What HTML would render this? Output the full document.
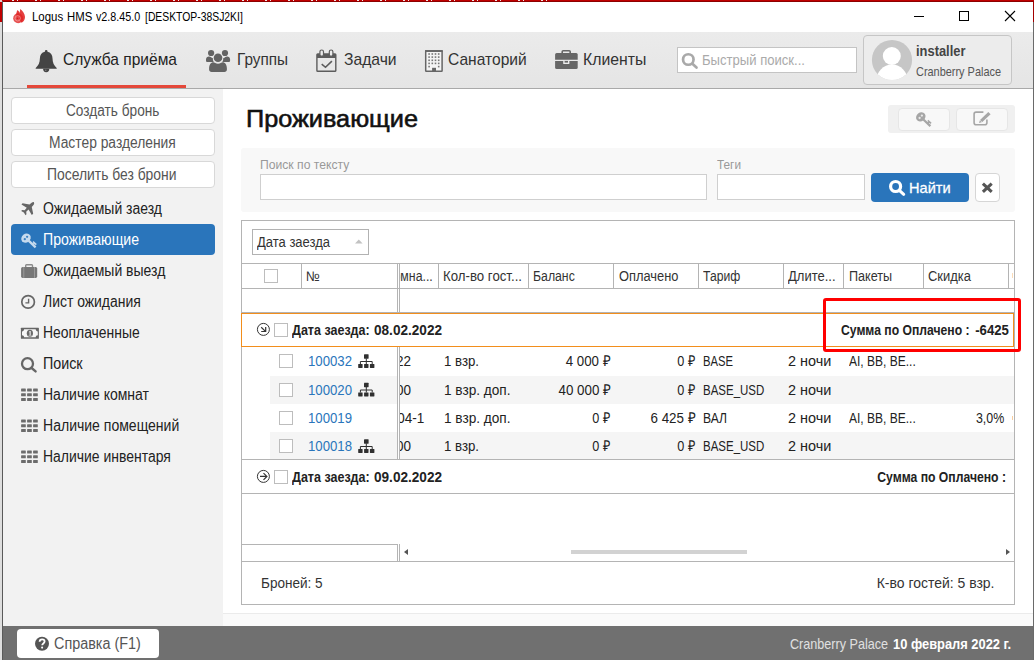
<!DOCTYPE html>
<html><head><meta charset="utf-8"><title>Logus HMS</title>
<style>
html,body{margin:0;padding:0;}
body{width:1034px;height:660px;overflow:hidden;background:#fff;font-family:"Liberation Sans",sans-serif;}
#w{position:relative;width:1034px;height:660px;overflow:hidden;}
#w div,#w span,#w svg{position:absolute;box-sizing:border-box;}
#w span{white-space:nowrap;line-height:1em;transform-origin:0 0;}
#w span.r{transform-origin:100% 0;}
</style></head><body><div id="w">
<div style="left:0px;top:0px;width:1034px;height:1px;background:#c00000;"></div>
<div style="left:3px;top:0px;width:560px;height:1px;background:repeating-linear-gradient(90deg,rgba(255,255,255,0) 0,rgba(255,255,255,0) 9px,#f3e4e4 9px,#f3e4e4 11px,rgba(255,255,255,0) 11px,rgba(255,255,255,0) 14px,#f3e4e4 14px,#f3e4e4 15px,rgba(255,255,255,0) 15px,rgba(255,255,255,0) 23px);"></div>
<div style="left:0px;top:1px;width:1034px;height:1px;background:#8c0000;"></div>
<div style="left:0px;top:0px;width:2px;height:2px;background:#ecc;"></div>
<div style="left:0px;top:2px;width:2px;height:20px;background:#c00000;"></div>
<div style="left:0px;top:22px;width:2px;height:638px;background:#dedede;"></div>
<div style="left:2px;top:1px;width:1px;height:659px;background:#5a5a5a;"></div>
<div style="left:1033px;top:2px;width:1px;height:20px;background:#a30000;"></div>
<div style="left:1033px;top:22px;width:1px;height:638px;background:#6a6a6a;"></div>
<div style="left:3px;top:2px;width:1030px;height:30px;background:#fff;"></div>
<div style="left:914px;top:16px;width:10px;height:1px;background:#000;"></div>
<div style="left:959px;top:11px;width:10px;height:10px;border:1px solid #000;"></div>
<svg style="left:1004px;top:10px" width="12" height="12" viewBox="0 0 12 12"><path d="M1 1L11 11M11 1L1 11" stroke="#000" stroke-width="1.1" fill="none"/></svg>
<div style="left:3px;top:32px;width:1030px;height:56px;background:linear-gradient(#ebebeb,#e5e5e5);"></div>
<div style="left:3px;top:88px;width:1030px;height:1px;background:#a9a9a9;"></div>
<div style="left:27px;top:85px;width:159px;height:3px;background:#e4483a;"></div>
<div style="left:677px;top:47px;width:180px;height:26px;background:#fff;border:1px solid #c4c4c4;"></div>
<div style="left:863px;top:35px;width:149px;height:50px;background:#ececec;border:1px solid #c6c6c6;border-radius:4px;"></div>
<div style="left:3px;top:89px;width:220px;height:537px;background:#f2f2f2;"></div>
<div style="left:11px;top:97px;width:204px;height:27px;background:#fff;border:1px solid #d8d8d8;border-radius:4px;"></div>
<div style="left:11px;top:129px;width:204px;height:27px;background:#fff;border:1px solid #d8d8d8;border-radius:4px;"></div>
<div style="left:11px;top:161px;width:204px;height:27px;background:#fff;border:1px solid #d8d8d8;border-radius:4px;"></div>
<div style="left:11px;top:224px;width:204px;height:31px;background:#2a75bb;border-radius:4px;"></div>
<div style="left:888px;top:105px;width:127px;height:28px;background:#f0f0f0;border-radius:3px;"></div>
<div style="left:898px;top:108px;width:52px;height:23px;background:#f8f8f8;border:1px solid #e6e6e6;border-radius:4px;"></div>
<div style="left:956px;top:108px;width:52px;height:23px;background:#f8f8f8;border:1px solid #e6e6e6;border-radius:4px;"></div>
<div style="left:241px;top:148px;width:774px;height:64px;background:#f8f8f8;border-radius:3px;"></div>
<div style="left:260px;top:174px;width:447px;height:26px;background:#fff;border:1px solid #cfcfcf;"></div>
<div style="left:717px;top:174px;width:148px;height:26px;background:#fff;border:1px solid #cfcfcf;"></div>
<div style="left:871px;top:173px;width:98px;height:29px;background:#2a75bb;border-radius:4px;"></div>
<div style="left:975px;top:173px;width:25px;height:29px;background:#fff;border:1px solid #d6d6d6;border-radius:4px;"></div>
<div style="left:241px;top:220px;width:774px;height:385px;border:1px solid #b4b4b4;background:#fff;"></div>
<div style="left:252px;top:229px;width:117px;height:26px;background:#fff;border:1px solid #b2b2b2;"></div>
<svg style="left:355px;top:239px" width="8" height="5" viewBox="0 0 8 5"><path d="M0 4.6L3.8 0.4L7.600 4.6Z" fill="#c2c2c2"/></svg>
<div style="left:242px;top:263px;width:772px;height:1px;background:#b4b4b4;"></div>
<div style="left:242px;top:288px;width:772px;height:1px;background:#b4b4b4;"></div>
<div style="left:242px;top:312px;width:772px;height:1px;background:#b4b4b4;"></div>
<div style="left:301px;top:264px;width:1px;height:24px;background:#b4b4b4;"></div>
<div style="left:438px;top:264px;width:1px;height:24px;background:#b4b4b4;"></div>
<div style="left:528px;top:264px;width:1px;height:24px;background:#b4b4b4;"></div>
<div style="left:613px;top:264px;width:1px;height:24px;background:#b4b4b4;"></div>
<div style="left:698px;top:264px;width:1px;height:24px;background:#b4b4b4;"></div>
<div style="left:783px;top:264px;width:1px;height:24px;background:#b4b4b4;"></div>
<div style="left:843px;top:264px;width:1px;height:24px;background:#b4b4b4;"></div>
<div style="left:923px;top:264px;width:1px;height:24px;background:#b4b4b4;"></div>
<div style="left:1008px;top:264px;width:1px;height:24px;background:#b4b4b4;"></div>
<div style="left:397px;top:264px;width:1px;height:195px;background:#b4b4b4;"></div>
<div style="left:399px;top:264px;width:1px;height:195px;background:#b4b4b4;"></div>
<div style="left:264px;top:269px;width:14px;height:14px;background:#fff;border:1px solid #bdbdbd;"></div>
<div style="left:400px;top:264px;width:38px;height:24px;overflow:hidden;"><span style="right:5px;top:5px;font-size:14px;color:#333;transform:scaleX(0.88);transform-origin:100% 0;">Комна...</span></div>
<div style="left:270px;top:376px;width:744px;height:28px;background:#f5f5f5;"></div>
<div style="left:270px;top:432px;width:744px;height:27px;background:#f5f5f5;"></div>
<div style="left:397px;top:347px;width:1px;height:112px;background:#b4b4b4;"></div>
<div style="left:398px;top:347px;width:1px;height:112px;background:#fff;"></div>
<div style="left:399px;top:347px;width:1px;height:112px;background:#b4b4b4;"></div>
<div style="left:279px;top:354px;width:14px;height:14px;background:#fff;border:1px solid #bdbdbd;"></div>
<div style="left:400px;top:347px;width:38px;height:29px;overflow:hidden;"><span class="r" style="right:26.5px;top:6px;font-size:15px;color:#222;transform:scaleX(0.9);">222</span></div>
<div style="left:279px;top:383px;width:14px;height:14px;background:#fff;border:1px solid #bdbdbd;"></div>
<div style="left:400px;top:376px;width:38px;height:28px;overflow:hidden;"><span class="r" style="right:26.5px;top:6px;font-size:15px;color:#222;transform:scaleX(0.9);">300</span></div>
<div style="left:279px;top:411px;width:14px;height:14px;background:#fff;border:1px solid #bdbdbd;"></div>
<div style="left:400px;top:404px;width:38px;height:28px;overflow:hidden;"><span class="r" style="right:13.600000000000001px;top:6px;font-size:15px;color:#222;transform:scaleX(0.9);">404-1</span></div>
<div style="left:279px;top:439px;width:14px;height:14px;background:#fff;border:1px solid #bdbdbd;"></div>
<div style="left:400px;top:432px;width:38px;height:27px;overflow:hidden;"><span class="r" style="right:26.5px;top:6px;font-size:15px;color:#222;transform:scaleX(0.9);">300</span></div>
<div style="left:1012px;top:416px;width:1px;height:4px;background:#f9cfa0;"></div>
<div style="left:1012px;top:273px;width:1px;height:5px;background:#fbdcb8;"></div>
<div style="left:241px;top:313px;width:773px;height:34px;border:1px solid #f28e1c;background:#fff;"></div>
<div style="left:274px;top:323px;width:14px;height:14px;background:#fff;border:1px solid #bdbdbd;"></div>
<div style="left:242px;top:459px;width:772px;height:1px;background:#b4b4b4;"></div>
<div style="left:242px;top:493px;width:772px;height:1px;background:#b4b4b4;"></div>
<div style="left:274px;top:470px;width:14px;height:14px;background:#fff;border:1px solid #bdbdbd;"></div>
<div style="left:242px;top:544px;width:156px;height:1px;background:#b4b4b4;"></div>
<div style="left:242px;top:561px;width:772px;height:1px;background:#b4b4b4;"></div>
<div style="left:397px;top:544px;width:1px;height:17px;background:#b4b4b4;"></div>
<div style="left:399px;top:544px;width:1px;height:17px;background:#b4b4b4;"></div>
<svg style="left:404px;top:549px" width="4" height="6" viewBox="0 0 4 6"><path d="M4 0L0 3L4 6Z" fill="#555"/></svg>
<svg style="left:1006px;top:549px" width="4" height="6" viewBox="0 0 4 6"><path d="M0 0L4 3L0 6Z" fill="#555"/></svg>
<div style="left:571px;top:550px;width:176px;height:4px;background:#d2d2d2;"></div>
<div style="left:223px;top:613px;width:810px;height:13px;background:#fafafa;border-top:1px solid #ebebeb;"></div>
<div style="left:3px;top:626px;width:1030px;height:34px;background:#707070;"></div>
<div style="left:17px;top:629px;width:142px;height:29px;background:#fff;border-radius:4px;"></div>
<svg style="left:0;top:0" width="1034" height="660" viewBox="0 0 1034 660"><g fill="#e02424"><circle cx="18.200" cy="18.200" r="5.000" opacity="0.800"/><path d="M16.100 16.500C16.000 13.800 16.700 11.600 17.400 9.900C18.400 10.800 19.300 11.700 19.700 12.600L19.500 16.500Z" opacity="0.900"/><path d="M19.200 15.500C19.800 12.800 20.000 10.800 20.200 9.000C22.600 10.800 25.000 13.800 25.000 17.000C25.000 19.900 23.400 21.900 21.400 22.700L19.200 18.500Z" opacity="0.880"/></g><circle cx="17.700" cy="18.300" r="2.700" fill="none" stroke="#f7b0b0" stroke-width="0.800" opacity="0.750"/><circle cx="17.500" cy="18.300" r="0.900" fill="#d81e1e"/><path d="M46.2 49.9a1.3 1.3 0 0 1 1.3 1.3v0.5c3.2 0.7 5 3.3 5 6.6c0 4.6 1.6 7.3 4.2 9.6c0.3 0.4 0 0.9 -0.5 0.9H36.2c-0.5 0 -0.8 -0.5 -0.5 -0.9c2.600 -2.3 4.2 -5 4.2 -9.6c0 -3.3 1.8 -5.900 5 -6.6v-0.5a1.3 1.3 0 0 1 1.300 -1.300z" fill="#444" /><path d="M43.1 68.800h6.200a3.100 3.400 0 0 1 -6.200 0z" fill="#444" /><circle cx="45.8" cy="70.2" r="0.7" fill="#8a8a8a"/><circle cx="211.1" cy="53.0" r="3.1" fill="#636363"/><circle cx="225.0" cy="53.0" r="3.1" fill="#636363"/><path d="M206 59.5c0 -2 1.3 -3.100 3.000 -3.100c0.800 0 1.500 0.300 2.100 0.800c0.600 0.500 1.300 0.900 1.900 1.000c-0.300 1.300 0.100 2.800 0.900 3.900H207.600c-1 0 -1.600 -0.700 -1.600 -1.600z" fill="#636363" /><path d="M230.100 59.5c0 -2 -1.300 -3.100 -3.000 -3.100c-0.800 0 -1.500 0.300 -2.100 0.800c-0.600 0.500 -1.300 0.900 -1.900 1.000c0.300 1.300 -0.100 2.800 -0.900 3.900H228.500c1 0 1.600 -0.700 1.600 -1.600z" fill="#636363" /><circle cx="218.0" cy="57.7" r="4.3" fill="#636363"/><path d="M209.1 68.5c0 -3.8 1.700 -6.300 4.300 -6.300c1.100 0 2.400 1.500 4.600 1.500s3.500 -1.500 4.600 -1.500c2.600 0 4.300 2.500 4.300 6.300v1c0 1.500 -1 2.400 -2.500 2.400H211.600c-1.500 0 -2.500 -0.900 -2.500 -2.400z" fill="#636363" /><path d="M317.700 53.2h17.300a1.500 1.500 0 0 1 1.500 1.500v15.700a1.500 1.500 0 0 1 -1.500 1.500h-17.300a1.500 1.500 0 0 1 -1.500 -1.500v-15.700a1.500 1.500 0 0 1 1.500 -1.500zM317.600 58v12.500h17.500V58z" fill="#5c5c5c" fill-rule="evenodd"/><rect x="319.9" y="50" width="3.6" height="6.2" rx="1.8" fill="#ebebeb" stroke="#5c5c5c" stroke-width="1.2"/><rect x="329.3" y="50" width="3.6" height="6.2" rx="1.8" fill="#ebebeb" stroke="#5c5c5c" stroke-width="1.2"/><path d="M321.700 64.2L325.500 67.300L331.900 61.2" fill="none" stroke="#5c5c5c" stroke-width="1.6" /><rect x="425.7" y="50.9" width="16.4" height="20.3" rx="0.5" fill="#f4f4f4" stroke="#666" stroke-width="1.5"/><rect x="425" y="50.1" width="17.8" height="1.8" rx="0" fill="#666" /><rect x="428.3" y="53.2" width="1.6" height="1.6" rx="0" fill="#777" /><rect x="431.5" y="53.2" width="1.6" height="1.6" rx="0" fill="#777" /><rect x="434.7" y="53.2" width="1.6" height="1.6" rx="0" fill="#777" /><rect x="437.9" y="53.2" width="1.6" height="1.6" rx="0" fill="#777" /><rect x="428.3" y="56.300000000000004" width="1.6" height="1.6" rx="0" fill="#777" /><rect x="431.5" y="56.300000000000004" width="1.6" height="1.6" rx="0" fill="#777" /><rect x="434.7" y="56.300000000000004" width="1.6" height="1.6" rx="0" fill="#777" /><rect x="437.9" y="56.300000000000004" width="1.6" height="1.6" rx="0" fill="#777" /><rect x="428.3" y="59.5" width="1.6" height="1.6" rx="0" fill="#777" /><rect x="431.5" y="59.5" width="1.6" height="1.6" rx="0" fill="#777" /><rect x="434.7" y="59.5" width="1.6" height="1.6" rx="0" fill="#777" /><rect x="437.9" y="59.5" width="1.6" height="1.6" rx="0" fill="#777" /><rect x="428.3" y="62.6" width="1.6" height="1.6" rx="0" fill="#777" /><rect x="431.5" y="62.6" width="1.6" height="1.6" rx="0" fill="#777" /><rect x="434.7" y="62.6" width="1.6" height="1.6" rx="0" fill="#777" /><rect x="437.9" y="62.6" width="1.6" height="1.6" rx="0" fill="#777" /><rect x="428.3" y="65.8" width="1.6" height="1.6" rx="0" fill="#777" /><rect x="437.9" y="65.8" width="1.6" height="1.6" rx="0" fill="#777" /><rect x="432.1" y="67.8" width="3.9" height="3.6" rx="0" fill="#666" /><path d="M562.2 53.5v-1.700a1 1 0 0 1 1 -1h6a1 1 0 0 1 1 1v1.700" fill="none" stroke="#666" stroke-width="1.6" /><path d="M556.600 53h19.600a1.500 1.500 0 0 1 1.500 1.500v5.300H555.100v-5.300a1.500 1.500 0 0 1 1.500 -1.500z" fill="#666" /><path d="M555.100 61h22.600v6.500a1.500 1.500 0 0 1 -1.500 1.500h-19.600a1.500 1.500 0 0 1 -1.500 -1.500z" fill="#666" /><rect x="563.2" y="60.9" width="6.2" height="3" rx="0.3" fill="#ececec" /><rect x="564.6" y="60.9" width="3.4" height="1.7" rx="0" fill="#666" /><circle cx="688.3" cy="59.5" r="5.25" fill="none" stroke="#a9a9a9" stroke-width="2.7"/><path d="M692.400 63.800L696.500 67.600" fill="none" stroke="#a9a9a9" stroke-width="2.7" stroke-linecap="round"/><clipPath id="av"><circle cx="892" cy="60" r="20.100"/></clipPath><circle cx="892" cy="60" r="20.1" fill="#c6c6c6"/><g clip-path="url(#av)" fill="#fff"><circle cx="891.800" cy="56.000" r="9.000"/><ellipse cx="892" cy="81.500" rx="15.800" ry="17.000"/></g><path d="M33.900 202.1c0.500 0.300 0.300 1.100 -0.300 1.900l-2.000 2.300l1.500 7.400l-1.500 1.200l-3.500 -5.700l-2.500 2.300l0.300 2.700l-1.100 1.000l-1.700 -2.900l-2.900 -1.700l1.000 -1.100l2.700 0.300l2.300 -2.500l-5.700 -3.500l1.200 -1.500l7.400 1.500l2.300 -2.000c0.800 -0.600 1.600 -0.800 2.500 -0.700z" fill="#666" transform="translate(34.3 214.9) scale(0.93) translate(-34.3 -214.9)"/><g transform="translate(26.0,238.1)"><ellipse cx="0" cy="0" rx="5.000" ry="4.300" transform="rotate(-38)" fill="#c6daee"/><circle cx="1.100" cy="-1.300" r="1.150" fill="#3d82c2"/><circle cx="-1.200" cy="1.100" r="1.150" fill="#3d82c2"/><path d="M2.600 2.600L9.600 9.300" stroke="#c6daee" stroke-width="2.300" fill="none"/><path d="M6.900 6.600L8.500 4.900M7.000 3.500L10.300 6.500" stroke="#c6daee" stroke-width="1.500" fill="none"/></g><path d="M25.700 267v-1.500a0.800 0.800 0 0 1 0.800 -0.800h5.200a0.800 0.800 0 0 1 0.800 0.800V267" fill="none" stroke="#8a8a8a" stroke-width="1.4" /><rect x="21.1" y="266.9" width="16.1" height="11" rx="1.6" fill="#777" /><rect x="23.5" y="266.9" width="0.7" height="11" rx="0" fill="#a9a9a9" /><rect x="34.1" y="266.9" width="0.7" height="11" rx="0" fill="#a9a9a9" /><circle cx="28.1" cy="301.9" r="6.3" fill="none" stroke="#666" stroke-width="1.7"/><path d="M28.600 298.700V302.900H25.400" fill="none" stroke="#666" stroke-width="1.4" /><rect x="20.9" y="327.8" width="18" height="10.9" rx="0.5" fill="#666" /><path d="M24.100 329.300h11.600c0 1.200 0.900 2.100 2.100 2.100v3.800c-1.200 0 -2.100 0.900 -2.100 2.100h-11.600c0 -1.200 -0.900 -2.100 -2.100 -2.100v-3.800c1.200 0 2.100 -0.900 2.100 -2.100z" fill="#f6f6f6" /><ellipse cx="29.900" cy="333.250" rx="3.100" ry="3.500" fill="#6a6a6a"/><path d="M29.100 331.600l1.100 -0.500h0.500v3.800h0.800v0.700h-2.800v-0.700h0.900v-2.800l-0.700 0.300z" fill="#f0f0f0" /><circle cx="27.5" cy="363.7" r="5.5" fill="none" stroke="#666" stroke-width="2.3"/><path d="M31.600 368.000L35.600 371.400" fill="none" stroke="#666" stroke-width="2.4" stroke-linecap="round"/><rect x="21.1" y="388.4" width="4.7" height="3.1" rx="0.5" fill="#6c6c6c" /><rect x="27.1" y="388.4" width="4.7" height="3.1" rx="0.5" fill="#6c6c6c" /><rect x="33.1" y="388.4" width="4.7" height="3.1" rx="0.5" fill="#6c6c6c" /><rect x="21.1" y="393.15" width="4.7" height="3.1" rx="0.5" fill="#6c6c6c" /><rect x="27.1" y="393.15" width="4.7" height="3.1" rx="0.5" fill="#6c6c6c" /><rect x="33.1" y="393.15" width="4.7" height="3.1" rx="0.5" fill="#6c6c6c" /><rect x="21.1" y="397.9" width="4.7" height="3.1" rx="0.5" fill="#6c6c6c" /><rect x="27.1" y="397.9" width="4.7" height="3.1" rx="0.5" fill="#6c6c6c" /><rect x="33.1" y="397.9" width="4.7" height="3.1" rx="0.5" fill="#6c6c6c" /><rect x="21.1" y="419.4" width="4.7" height="3.1" rx="0.5" fill="#6c6c6c" /><rect x="27.1" y="419.4" width="4.7" height="3.1" rx="0.5" fill="#6c6c6c" /><rect x="33.1" y="419.4" width="4.7" height="3.1" rx="0.5" fill="#6c6c6c" /><rect x="21.1" y="424.15" width="4.7" height="3.1" rx="0.5" fill="#6c6c6c" /><rect x="27.1" y="424.15" width="4.7" height="3.1" rx="0.5" fill="#6c6c6c" /><rect x="33.1" y="424.15" width="4.7" height="3.1" rx="0.5" fill="#6c6c6c" /><rect x="21.1" y="428.9" width="4.7" height="3.1" rx="0.5" fill="#6c6c6c" /><rect x="27.1" y="428.9" width="4.7" height="3.1" rx="0.5" fill="#6c6c6c" /><rect x="33.1" y="428.9" width="4.7" height="3.1" rx="0.5" fill="#6c6c6c" /><rect x="21.1" y="450.4" width="4.7" height="3.1" rx="0.5" fill="#6c6c6c" /><rect x="27.1" y="450.4" width="4.7" height="3.1" rx="0.5" fill="#6c6c6c" /><rect x="33.1" y="450.4" width="4.7" height="3.1" rx="0.5" fill="#6c6c6c" /><rect x="21.1" y="455.15" width="4.7" height="3.1" rx="0.5" fill="#6c6c6c" /><rect x="27.1" y="455.15" width="4.7" height="3.1" rx="0.5" fill="#6c6c6c" /><rect x="33.1" y="455.15" width="4.7" height="3.1" rx="0.5" fill="#6c6c6c" /><rect x="21.1" y="459.9" width="4.7" height="3.1" rx="0.5" fill="#6c6c6c" /><rect x="27.1" y="459.9" width="4.7" height="3.1" rx="0.5" fill="#6c6c6c" /><rect x="33.1" y="459.9" width="4.7" height="3.1" rx="0.5" fill="#6c6c6c" /><g transform="translate(920.8,116.9)"><ellipse cx="0" cy="0" rx="5.000" ry="4.300" transform="rotate(-38)" fill="#a6a6a6"/><circle cx="1.100" cy="-1.300" r="1.150" fill="#e9e9e9"/><circle cx="-1.200" cy="1.100" r="1.150" fill="#e9e9e9"/><path d="M2.600 2.600L9.600 9.300" stroke="#a6a6a6" stroke-width="2.300" fill="none"/><path d="M6.900 6.600L8.500 4.900M7.000 3.500L10.300 6.500" stroke="#a6a6a6" stroke-width="1.500" fill="none"/></g><path d="M986.900 119.500v3.200a2 2 0 0 1 -2 2h-8.800a2 2 0 0 1 -2 -2v-8.600a2 2 0 0 1 2 -2h7.300" fill="none" stroke="#a6a6a6" stroke-width="1.6" /><path d="M988.300 112.000l2.300 2.200l-8.300 7.900l-3.300 1.000l1.000 -3.200z" fill="#a6a6a6" /><path d="M980.100 120.300l1.800 1.700" fill="none" stroke="#f7f7f7" stroke-width="0.7" /><circle cx="895.6" cy="186.5" r="5.0" fill="none" stroke="#fff" stroke-width="3.2"/><path d="M899.600 190.600L903.700 194.300" fill="none" stroke="#fff" stroke-width="3.1" stroke-linecap="round"/><path d="M982.900 183.700L991.700 191.900M991.700 183.700L982.900 191.900" fill="none" stroke="#555" stroke-width="3.1" /><rect x="364.0" y="354.29999999999995" width="4.6" height="4.4" rx="0.4" fill="#303030" /><rect x="358.2" y="363.9" width="4.4" height="4.1" rx="0.4" fill="#303030" /><rect x="364.09999999999997" y="363.9" width="4.4" height="4.1" rx="0.4" fill="#303030" /><rect x="369.9" y="363.9" width="4.5" height="4.1" rx="0.4" fill="#303030" /><path d="M366.3 358.4V364.0M360.4 364.0V361.5H372.2V364.0" fill="none" stroke="#303030" stroke-width="1.0" /><rect x="364.0" y="382.79999999999995" width="4.6" height="4.4" rx="0.4" fill="#303030" /><rect x="358.2" y="392.4" width="4.4" height="4.1" rx="0.4" fill="#303030" /><rect x="364.09999999999997" y="392.4" width="4.4" height="4.1" rx="0.4" fill="#303030" /><rect x="369.9" y="392.4" width="4.5" height="4.1" rx="0.4" fill="#303030" /><path d="M366.3 386.9V392.5M360.4 392.5V390.0H372.2V392.5" fill="none" stroke="#303030" stroke-width="1.0" /><rect x="364.0" y="439.29999999999995" width="4.6" height="4.4" rx="0.4" fill="#303030" /><rect x="358.2" y="448.9" width="4.4" height="4.1" rx="0.4" fill="#303030" /><rect x="364.09999999999997" y="448.9" width="4.4" height="4.1" rx="0.4" fill="#303030" /><rect x="369.9" y="448.9" width="4.5" height="4.1" rx="0.4" fill="#303030" /><path d="M366.3 443.4V449.0M360.4 449.0V446.5H372.2V449.0" fill="none" stroke="#303030" stroke-width="1.0" /><circle cx="263.4" cy="329.4" r="6.0" fill="none" stroke="#333" stroke-width="1.0"/><path d="M261.200 327.200L265.500 331.400M265.700 327.100V331.500H261.200" fill="none" stroke="#333" stroke-width="1.2" /><circle cx="263.4" cy="476.4" r="6.0" fill="none" stroke="#333" stroke-width="1.0"/><path d="M260.000 476.400H266.800M263.500 473.100L266.900 476.400L263.500 479.800" fill="none" stroke="#333" stroke-width="1.2" /><circle cx="42.0" cy="643.7" r="7.0" fill="#555"/><path d="M39.600 641.800c0 -1.600 1.100 -2.500 2.500 -2.500s2.500 0.900 2.500 2.200c0 1.900 -2.400 2.000 -2.400 3.700" fill="none" stroke="#fff" stroke-width="1.8" /><circle cx="42.1" cy="647.6" r="1.05" fill="#fff"/></svg>
<div style="left:823px;top:298px;width:198px;height:54px;border:3px solid #f00;border-radius:3px;"></div>
<span id="t0" style="top:11px;font-size:12px;color:#000;left:32.2px;transform:scaleX(0.9540);">Logus</span>
<span id="t1" style="top:11px;font-size:12px;color:#000;left:67.2px;transform:scaleX(0.9448);">HMS</span>
<span id="t2" style="top:11px;font-size:12px;color:#000;left:96.2px;transform:scaleX(0.8952);">v2.8.45.0</span>
<span id="t3" style="top:11px;font-size:12px;color:#000;left:144.8px;transform:scaleX(0.8643);">[DESKTOP-38SJ2KI]</span>
<span id="t4" style="top:51px;font-size:17px;color:#222;left:63px;transform:scaleX(0.9139);">Служба приёма</span>
<span id="t5" style="top:51px;font-size:17px;color:#333;left:236.5px;transform:scaleX(0.9002);">Группы</span>
<span id="t6" style="top:51px;font-size:17px;color:#333;left:344px;transform:scaleX(0.9215);">Задачи</span>
<span id="t7" style="top:51px;font-size:17px;color:#333;left:448px;transform:scaleX(0.9163);">Санаторий</span>
<span id="t8" style="top:51px;font-size:17px;color:#333;left:583px;transform:scaleX(0.9300);">Клиенты</span>
<span id="t9" style="top:52px;font-size:15px;color:#aaa;left:701.5px;transform:scaleX(0.8723);">Быстрый поиск...</span>
<span id="t10" style="top:43px;font-size:15px;color:#444;font-weight:700;left:916px;transform:scaleX(0.8604);">installer</span>
<span id="t11" style="top:65px;font-size:13px;color:#555;left:916px;transform:scaleX(0.8403);">Cranberry Palace</span>
<span id="t12" style="top:103px;font-size:16px;color:#555;left:65.9px;transform:scaleX(0.8538);">Создать бронь</span>
<span id="t13" style="top:135px;font-size:16px;color:#555;left:48.7px;transform:scaleX(0.8639);">Мастер разделения</span>
<span id="t14" style="top:167px;font-size:16px;color:#555;left:47.2px;transform:scaleX(0.8679);">Поселить без брони</span>
<span id="t15" style="top:201px;font-size:16px;color:#222;left:43.4px;transform:scaleX(0.8737);">Ожидаемый заезд</span>
<span id="t16" style="top:232px;font-size:16px;color:#fff;left:43.4px;transform:scaleX(0.8809);">Проживающие</span>
<span id="t17" style="top:263px;font-size:16px;color:#222;left:43.4px;transform:scaleX(0.8738);">Ожидаемый выезд</span>
<span id="t18" style="top:294px;font-size:16px;color:#222;left:43.4px;transform:scaleX(0.8713);">Лист ожидания</span>
<span id="t19" style="top:325px;font-size:16px;color:#222;left:43.4px;transform:scaleX(0.8696);">Неоплаченные</span>
<span id="t20" style="top:356px;font-size:16px;color:#222;left:43.4px;transform:scaleX(0.8930);">Поиск</span>
<span id="t21" style="top:387px;font-size:16px;color:#222;left:43.4px;transform:scaleX(0.8750);">Наличие комнат</span>
<span id="t22" style="top:418px;font-size:16px;color:#222;left:43.4px;transform:scaleX(0.8771);">Наличие помещений</span>
<span id="t23" style="top:449px;font-size:16px;color:#222;left:43.4px;transform:scaleX(0.8724);">Наличие инвентаря</span>
<span id="t24" style="top:108px;font-size:23px;color:#111;left:246px;transform:scaleX(1.0979);-webkit-text-stroke:0.55px #111;">Проживающие</span>
<span id="t25" style="top:158px;font-size:13px;color:#999;left:260px;transform:scaleX(0.9351);">Поиск по тексту</span>
<span id="t26" style="top:158px;font-size:13px;color:#999;left:717px;transform:scaleX(0.9073);">Теги</span>
<span id="t27" style="top:180px;font-size:15px;color:#fff;left:908.6px;transform:scaleX(0.9717);-webkit-text-stroke:0.3px #fff;">Найти</span>
<span id="t28" style="top:235px;font-size:14px;color:#333;left:257px;transform:scaleX(0.9283);">Дата заезда</span>
<span id="t29" style="top:269px;font-size:14px;color:#333;left:305.8px;transform:scaleX(0.9314);">№</span>
<span id="t30" style="top:269px;font-size:14px;color:#333;left:442.8px;transform:scaleX(0.9456);">Кол-во гост...</span>
<span id="t31" style="top:269px;font-size:14px;color:#333;left:533.3px;transform:scaleX(0.8768);">Баланс</span>
<span id="t32" style="top:269px;font-size:14px;color:#333;left:618.5px;transform:scaleX(0.9178);">Оплачено</span>
<span id="t33" style="top:269px;font-size:14px;color:#333;left:703.3px;transform:scaleX(0.8706);">Тариф</span>
<span id="t34" style="top:269px;font-size:14px;color:#333;left:787.8px;transform:scaleX(0.9299);">Длите...</span>
<span id="t35" style="top:269px;font-size:14px;color:#333;left:848.7px;transform:scaleX(0.9012);">Пакеты</span>
<span id="t36" style="top:269px;font-size:14px;color:#333;left:928.2px;transform:scaleX(0.9235);">Скидка</span>
<span id="t37" style="top:353px;font-size:15px;color:#2a75bb;left:307.6px;transform:scaleX(0.8789);">100032</span>
<span id="t38" style="top:353px;font-size:15px;color:#222;left:443.6px;transform:scaleX(0.8815);">1 взр.</span>
<span id="t39" class="r" style="top:353px;font-size:15px;color:#222;right:423.29999999999995px;transform:scaleX(0.8872);">4 000 ₽</span>
<span id="t40" class="r" style="top:353px;font-size:15px;color:#222;right:338.20000000000005px;transform:scaleX(0.8459);">0 ₽</span>
<span id="t41" style="top:353px;font-size:15px;color:#222;left:702.6px;transform:scaleX(0.7494);">BASE</span>
<span id="t42" style="top:353px;font-size:15px;color:#222;left:788px;transform:scaleX(0.9622);">2 ночи</span>
<span id="t43" style="top:353px;font-size:15px;color:#222;left:848.7px;transform:scaleX(0.8012);">AI, BB, BE...</span>
<span id="t44" style="top:382px;font-size:15px;color:#2a75bb;left:307.6px;transform:scaleX(0.8789);">100020</span>
<span id="t45" style="top:382px;font-size:15px;color:#222;left:443.6px;transform:scaleX(0.9078);">1 взр. доп.</span>
<span id="t46" class="r" style="top:382px;font-size:15px;color:#222;right:423.29999999999995px;transform:scaleX(0.8908);">40 000 ₽</span>
<span id="t47" class="r" style="top:382px;font-size:15px;color:#222;right:338.20000000000005px;transform:scaleX(0.8459);">0 ₽</span>
<span id="t48" style="top:382px;font-size:15px;color:#222;left:702.6px;transform:scaleX(0.7658);">BASE_USD</span>
<span id="t49" style="top:382px;font-size:15px;color:#222;left:788px;transform:scaleX(0.9622);">2 ночи</span>
<span id="t50" style="top:410px;font-size:15px;color:#2a75bb;left:307.6px;transform:scaleX(0.8789);">100019</span>
<span id="t51" style="top:410px;font-size:15px;color:#222;left:443.6px;transform:scaleX(0.9078);">1 взр. доп.</span>
<span id="t52" class="r" style="top:410px;font-size:15px;color:#222;right:423.29999999999995px;transform:scaleX(0.8459);">0 ₽</span>
<span id="t53" class="r" style="top:410px;font-size:15px;color:#222;right:338.20000000000005px;transform:scaleX(0.8912);">6 425 ₽</span>
<span id="t54" style="top:410px;font-size:15px;color:#222;left:702.6px;transform:scaleX(0.8084);">ВАЛ</span>
<span id="t55" style="top:410px;font-size:15px;color:#222;left:788px;transform:scaleX(0.9622);">2 ночи</span>
<span id="t56" style="top:410px;font-size:15px;color:#222;left:848.7px;transform:scaleX(0.8012);">AI, BB, BE...</span>
<span id="t57" class="r" style="top:410px;font-size:15px;color:#222;right:29.600000000000023px;transform:scaleX(0.8274);">3,0%</span>
<span id="t58" style="top:438px;font-size:15px;color:#2a75bb;left:307.6px;transform:scaleX(0.8789);">100018</span>
<span id="t59" style="top:438px;font-size:15px;color:#222;left:443.6px;transform:scaleX(0.8815);">1 взр.</span>
<span id="t60" class="r" style="top:438px;font-size:15px;color:#222;right:423.29999999999995px;transform:scaleX(0.8459);">0 ₽</span>
<span id="t61" class="r" style="top:438px;font-size:15px;color:#222;right:338.20000000000005px;transform:scaleX(0.8459);">0 ₽</span>
<span id="t62" style="top:438px;font-size:15px;color:#222;left:702.6px;transform:scaleX(0.7658);">BASE_USD</span>
<span id="t63" style="top:438px;font-size:15px;color:#222;left:788px;transform:scaleX(0.9622);">2 ночи</span>
<span id="t64" style="top:323px;font-size:14px;color:#222;font-weight:700;left:292.2px;transform:scaleX(0.8937);">Дата заезда:</span>
<span id="t65" style="top:323px;font-size:14px;color:#222;font-weight:700;left:374px;transform:scaleX(0.9703);">08.02.2022</span>
<span id="t66" style="top:323px;font-size:14px;color:#222;font-weight:700;left:841.3px;transform:scaleX(0.8684);">Сумма по Оплачено :</span>
<span id="t67" class="r" style="top:323px;font-size:14px;color:#222;font-weight:700;right:25px;transform:scaleX(0.9382);">-6425</span>
<span id="t68" style="top:470px;font-size:14px;color:#222;font-weight:700;left:292.2px;transform:scaleX(0.8937);">Дата заезда:</span>
<span id="t69" style="top:470px;font-size:14px;color:#222;font-weight:700;left:374px;transform:scaleX(0.9703);">09.02.2022</span>
<span id="t70" class="r" style="top:470px;font-size:14px;color:#222;font-weight:700;right:28px;transform:scaleX(0.8698);">Сумма по Оплачено :</span>
<span id="t71" style="top:575px;font-size:15px;color:#333;left:261.4px;transform:scaleX(0.9030);">Броней: 5</span>
<span id="t72" class="r" style="top:575px;font-size:15px;color:#333;right:39.799999999999955px;transform:scaleX(0.9313);">К-во гостей: 5 взр.</span>
<span id="t73" style="top:636px;font-size:16px;color:#555;left:53.8px;transform:scaleX(0.8990);">Справка (F1)</span>
<span id="t74" style="top:636px;font-size:15px;color:#e0e0e0;left:789.6px;transform:scaleX(0.8405);">Cranberry Palace</span>
<span id="t75" style="top:636px;font-size:15px;color:#fff;font-weight:700;left:893.4px;transform:scaleX(0.8581);">10 февраля 2022 г.</span>
</div></body></html>
